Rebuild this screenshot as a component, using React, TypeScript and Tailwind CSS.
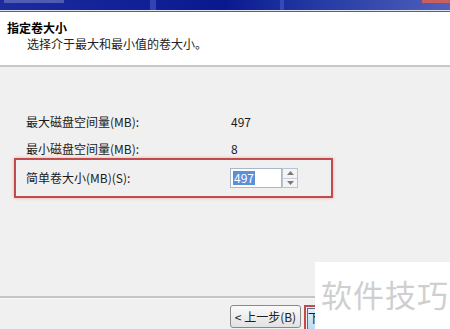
import React from "react";

const font = {
  fontFamily: '"Noto Sans CJK SC", "Liberation Sans", sans-serif',
};

function Spinner() {
  return (
    <div className="flex h-[20px] w-[16px] flex-col border border-[#b8c4d4] bg-[#f4f4f4]">
      <div className="flex flex-1 items-center justify-center border-b border-[#c8d0dc]">
        <svg width="7" height="4" viewBox="0 0 7 4">
          <path d="M0 4 L3.5 0 L7 4 Z" fill="#7a7a7a" />
        </svg>
      </div>
      <div className="flex flex-1 items-center justify-center">
        <svg width="7" height="4" viewBox="0 0 7 4">
          <path d="M0 0 L3.5 4 L7 0 Z" fill="#7a7a7a" />
        </svg>
      </div>
    </div>
  );
}

export default function App() {
  return (
    <div
      className="relative flex h-[329px] w-[450px] flex-col overflow-hidden bg-[#f0f0f0] text-[12px] leading-[16px] text-[#1a1a1a]"
      style={font}
    >
      {/* window title bar, mostly cropped */}
      <div className="relative h-[10px] shrink-0 overflow-hidden bg-gradient-to-r from-[#1c2c9e] via-[#0a1890] to-[#5060bc]">
        <div className="absolute left-[4px] top-0 h-[3px] w-[60px] bg-[#8890c8] opacity-50" />
        <div className="absolute left-[150px] top-0 h-full w-[6px] bg-[#4a5cc8] opacity-60" />
        <div className="absolute left-[280px] top-0 h-full w-[4px] bg-[#4a5cc8] opacity-60" />
        <div className="absolute right-0 top-0 h-[3px] w-[28px] bg-[#c86060]" />
      </div>
      <div className="h-[1px] shrink-0 bg-[#dfe3f0]" />
      <div className="h-[1px] shrink-0 bg-[#5a5f80]" />

      {/* header */}
      <div className="flex h-[55px] shrink-0 flex-col border-b-2 border-[#c8c8c8] bg-white pl-[7px] pt-[9px]">
        <div className="text-[12px] font-bold leading-[14px] text-black">指定卷大小</div>
        <div className="mt-[2px] pl-[20px] text-[12px] leading-[14px] text-[#222]">
          选择介于最大和最小值的卷大小。
        </div>
      </div>

      {/* body */}
      <div className="flex flex-1 flex-col pt-[47px]">
        <div className="flex pl-[26px]">
          <span className="w-[205px]">最大磁盘空间量(MB):</span>
          <span>497</span>
        </div>
        <div className="mt-[11px] flex pl-[26px]">
          <span className="w-[205px]">最小磁盘空间量(MB):</span>
          <span>8</span>
        </div>
        <div className="ml-[14px] mt-[1px] flex h-[40px] w-[319px] items-center border-2 border-[#c24a4a] pl-[10px] shadow-[0_0_3px_#eaa8a8]">
          <span className="w-[204px]">简单卷大小(MB)(S):</span>
          <div className="flex items-center">
            <div className="flex h-[20px] w-[52px] items-center border border-[#a8b8cc] bg-white pl-[2px]">
              <span className="bg-[#5b8fd8] px-[1px] leading-[14px] text-white">497</span>
            </div>
            <Spinner />
          </div>
        </div>
      </div>

      {/* footer */}
      <div className="h-[33px] shrink-0 border-t-2 border-[#c4c4c4] bg-[#f0f0f0]">
        <div className="h-[1px] bg-[#f8f8f8]" />
        <div className="flex pl-[230px] pt-[6px]">
          <button
            type="button"
            className="flex h-[23px] w-[71px] items-center justify-center rounded-[3px] border border-[#8a8a8a] bg-gradient-to-b from-[#fafafa] to-[#e2e2e2] text-[12px] text-[#222]"
          >
            &lt; 上一步(B)
          </button>
          <div className="ml-[3px] h-[26px] w-[20px] border-2 border-r-0 border-b-0 border-[#c24a4a] pl-[1px] pt-[1px]">
            <div className="h-full w-full border border-[#5a6a8a] bg-gradient-to-b from-[#e4f0fa] to-[#bcd8f0] text-[12px] leading-[18px]">
              下
            </div>
          </div>
        </div>
      </div>

      {/* watermark */}
      <div className="absolute left-[315px] top-[262px] h-[67px] w-[135px] bg-white pl-[6px] pt-[14px]">
        <span className="text-[31px] leading-[36px] tracking-[1px] text-[#cfcfcf]">软件技巧</span>
      </div>
    </div>
  );
}
